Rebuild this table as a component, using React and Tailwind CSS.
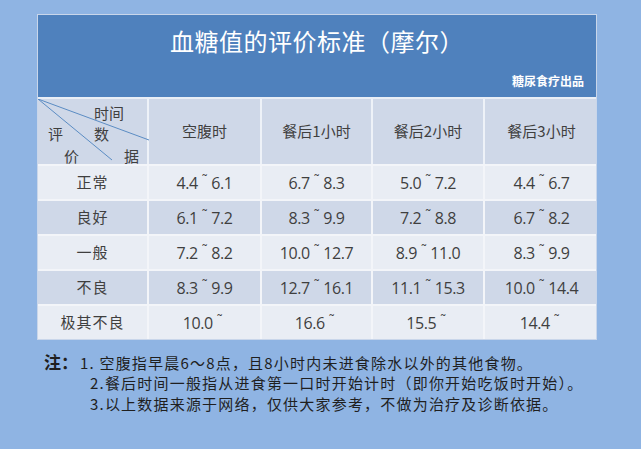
import React from "react";

const rows = [
  { label: "正常", vals: ["4.4 ˜ 6.1", "6.7 ˜ 8.3", "5.0 ˜ 7.2", "4.4 ˜ 6.7"], tone: "light" },
  { label: "良好", vals: ["6.1 ˜ 7.2", "8.3 ˜ 9.9", "7.2 ˜ 8.8", "6.7 ˜ 8.2"], tone: "dark" },
  { label: "一般", vals: ["7.2 ˜ 8.2", "10.0 ˜ 12.7", "8.9 ˜ 11.0", "8.3 ˜ 9.9"], tone: "light" },
  { label: "不良", vals: ["8.3 ˜ 9.9", "12.7 ˜ 16.1", "11.1 ˜ 15.3", "10.0 ˜ 14.4"], tone: "dark" },
  { label: "极其不良", vals: ["10.0 ˜", "16.6 ˜", "15.5 ˜", "14.4 ˜"], tone: "light" },
];

const heads = ["空腹时", "餐后1小时", "餐后2小时", "餐后3小时"];

const cols = "grid grid-cols-[111px_113px_111px_112px_113px]";

const Range = ({ text }) => {
  const [a, b] = text.split(" ˜");
  return (
    <span className="font-['Open_Sans','Liberation_Sans',sans-serif] text-[16px] tracking-[-0.4px] leading-none">
      {a}
      <span className="relative -top-[5px] ml-[4px] mr-[4px] text-[13px]">˜</span>
      {b ? b.trim() : ""}
    </span>
  );
};

export default function App() {
  return (
    <div className="w-[641px] h-[449px] bg-[#8fb4e3] pt-[14px] font-['Noto_Sans_CJK_SC',sans-serif] overflow-hidden">
      <div className="ml-[37px] w-[560px] border border-[#c9d6ea]">
        <div className="h-[82px] bg-[#4f81bd] flex flex-col">
          <div className="text-center text-white text-[24px] leading-none pt-[14px] tracking-[0.5px]">
            血糖值的评价标准（摩尔）
          </div>
          <div className="mt-auto mb-[7px] text-right pr-[12px] text-white text-[12px] font-bold">
            糖尿食疗出品
          </div>
        </div>

        <div className="text-[#3f3f3f]">
          <div className={`${cols} h-[67px] bg-[#cfd8e8] border-t-2 border-[#e9eef6]`}>
            <div className="relative border-r-2 border-[#eef2f8] text-[15px]">
              <svg className="absolute inset-0" width="111" height="67" viewBox="0 0 111 67">
                <line x1="0" y1="0" x2="111" y2="41" stroke="#5b8cc3" strokeWidth="1" />
                <line x1="0" y1="0" x2="74" y2="61" stroke="#5b8cc3" strokeWidth="1" />
              </svg>
              <span className="absolute left-[56px] top-[3px]">时间</span>
              <span className="absolute left-[10px] top-[24px]">评</span>
              <span className="absolute left-[56px] top-[24px]">数</span>
              <span className="absolute left-[26px] top-[46px]">价</span>
              <span className="absolute left-[86px] top-[46px]">据</span>
            </div>
            {heads.map((h, i) => (
              <div
                key={h}
                className={`flex items-center justify-center text-[15px] ${i < 3 ? "border-r-2 border-[#eef2f8]" : ""}`}
              >
                {h}
              </div>
            ))}
          </div>

          {rows.map((r) => (
            <div
              key={r.label}
              className={`${cols} h-[35px] border-t-2 border-[#f3f5f9] ${r.tone === "light" ? "bg-[#e9edf4]" : "bg-[#cfd8e8]"}`}
            >
              <div className="flex items-center justify-center text-[15px] border-r-2 border-[#f3f5f9] tracking-[1px]">
                {r.label}
              </div>
              {r.vals.map((v, i) => (
                <div
                  key={i}
                  className={`flex items-center justify-center ${i < 3 ? "border-r-2 border-[#f3f5f9]" : ""}`}
                >
                  <Range text={v} />
                </div>
              ))}
            </div>
          ))}
        </div>
      </div>

      <div className="mt-[11px] ml-[44px] text-[#1f1f1f] text-[15px] leading-[21px] tracking-[1.2px]">
        <div className="flex items-baseline h-[21px]">
          <span className="font-bold text-[17px] w-[36px] tracking-normal">注：</span>
          <span>1. 空腹指早晨6～8点，且8小时内未进食除水以外的其他食物。</span>
        </div>
        <div className="pl-[46px] h-[21px]">2.餐后时间一般指从进食第一口时开始计时（即你开始吃饭时开始）。</div>
        <div className="pl-[46px] h-[21px]">3.以上数据来源于网络，仅供大家参考，不做为治疗及诊断依据。</div>
      </div>
    </div>
  );
}
